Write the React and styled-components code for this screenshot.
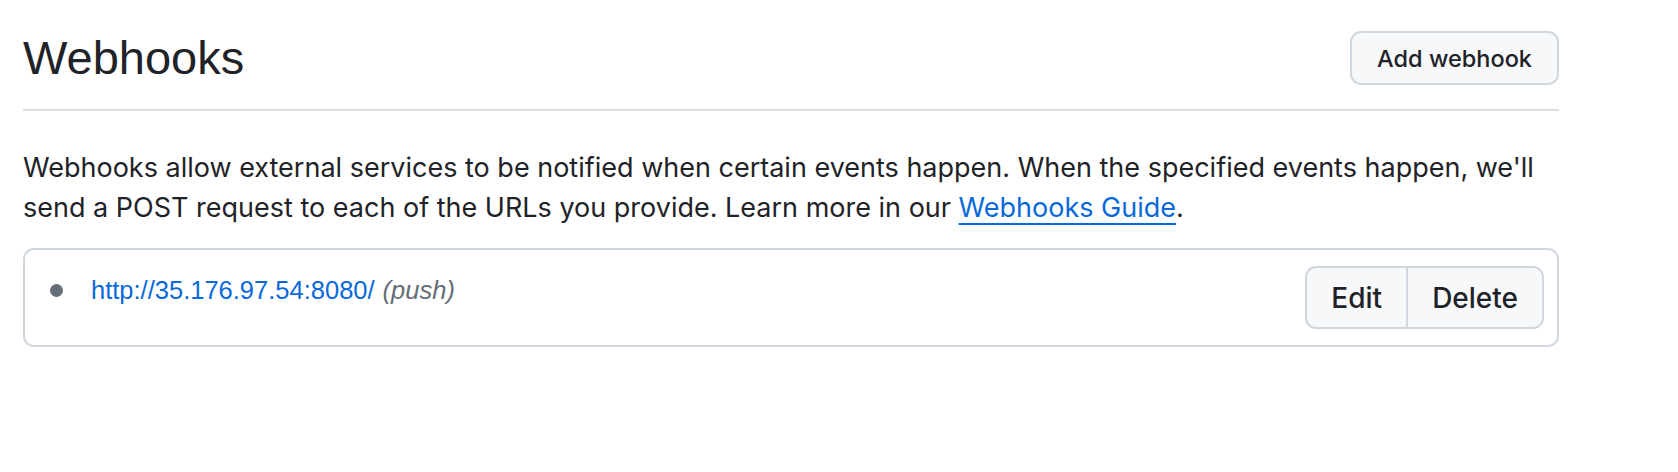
import React from 'react';
import styled, { createGlobalStyle } from 'styled-components';

const COLORS = {
  text: '#1f2328',
  muted: '#656d76',
  link: '#0969da',
  border: '#d0d7de',
  divider: '#d8dee4',
  buttonBg: '#f6f8fa',
};

const GlobalStyle = createGlobalStyle`
  body {
    margin: 0;
    background: #ffffff;
    color: ${COLORS.text};
    font-family: Inter, "Noto Sans", sans-serif;
  }
`;

const Page = styled.div`
  width: 1536px;
  padding: 31px 0 0 23px;
`;

const Header = styled.div`
  display: flex;
  align-items: center;
  justify-content: space-between;
  padding-bottom: 24px;
  border-bottom: 2px solid ${COLORS.divider};
`;

const Title = styled.h2`
  margin: 0;
  font-family: "Liberation Sans", Arial, sans-serif;
  font-size: 47px;
  font-weight: 400;
  line-height: 54px;
  color: ${COLORS.text};
`;

const Button = styled.button`
  box-sizing: border-box;
  height: 54px;
  padding: 0 25px;
  border: 2px solid ${COLORS.border};
  border-radius: 11px;
  background: ${COLORS.buttonBg};
  color: ${COLORS.text};
  font-family: Inter, "Noto Sans", sans-serif;
  font-size: 23.5px;
  font-weight: 500;
  cursor: pointer;
`;

const Description = styled.p`
  margin: 37px 0 20px;
  font-size: 27px;
  line-height: 40px;
`;

const Link = styled.a`
  color: ${COLORS.link};
  text-decoration: none;
`;

const GuideLink = styled(Link)`
  text-decoration: underline;
  text-decoration-thickness: 2px;
  text-underline-offset: 6px;
`;

const Card = styled.div`
  border: 2px solid ${COLORS.border};
  border-radius: 11px;
`;

const HookRow = styled.div`
  display: flex;
  align-items: flex-start;
  justify-content: space-between;
  padding: 16px 13px 16px 25px;
`;

const HookInfo = styled.div`
  display: flex;
  align-items: center;
  gap: 28px;
  padding-top: 4px;
  font-family: "Liberation Sans", Arial, sans-serif;
  font-size: 25.5px;
  line-height: 40px;
`;

const Dot = styled.span`
  width: 13px;
  height: 13px;
  border-radius: 50%;
  background: ${COLORS.muted};
`;

const Events = styled.em`
  color: ${COLORS.muted};
  margin-left: 8px;
`;

const ButtonGroup = styled.div`
  display: flex;
  border: 2px solid ${COLORS.border};
  border-radius: 11px;
  overflow: hidden;
  background: ${COLORS.buttonBg};
`;

const GroupButton = styled.button`
  height: 59px;
  padding: 0 ${props => props.$pad}px;
  border: 0;
  border-left: ${props => (props.$first ? '0' : `2px solid ${COLORS.border}`)};
  background: transparent;
  color: ${COLORS.text};
  font-family: Inter, "Noto Sans", sans-serif;
  font-size: 28px;
  font-weight: 500;
  cursor: pointer;
`;

const hooks = [{ url: 'http://35.176.97.54:8080/', events: 'push' }];

export default function App() {
  return (
    <>
      <GlobalStyle />
      <Page>
        <Header>
          <Title>Webhooks</Title>
          <Button>Add webhook</Button>
        </Header>

        <Description>
          Webhooks allow external services to be notified when certain events happen. When the specified
          events happen, we'll send a POST request to each of the URLs you provide. Learn more in our{' '}
          <GuideLink href="#">Webhooks Guide</GuideLink>.
        </Description>

        <Card>
          {hooks.map(hook => (
            <HookRow key={hook.url}>
              <HookInfo>
                <Dot />
                <span>
                  <Link href="#">{hook.url}</Link>
                  <Events>({hook.events})</Events>
                </span>
              </HookInfo>
              <ButtonGroup>
                <GroupButton $first $pad={24}>Edit</GroupButton>
                <GroupButton $pad={24}>Delete</GroupButton>
              </ButtonGroup>
            </HookRow>
          ))}
        </Card>
      </Page>
    </>
  );
}
